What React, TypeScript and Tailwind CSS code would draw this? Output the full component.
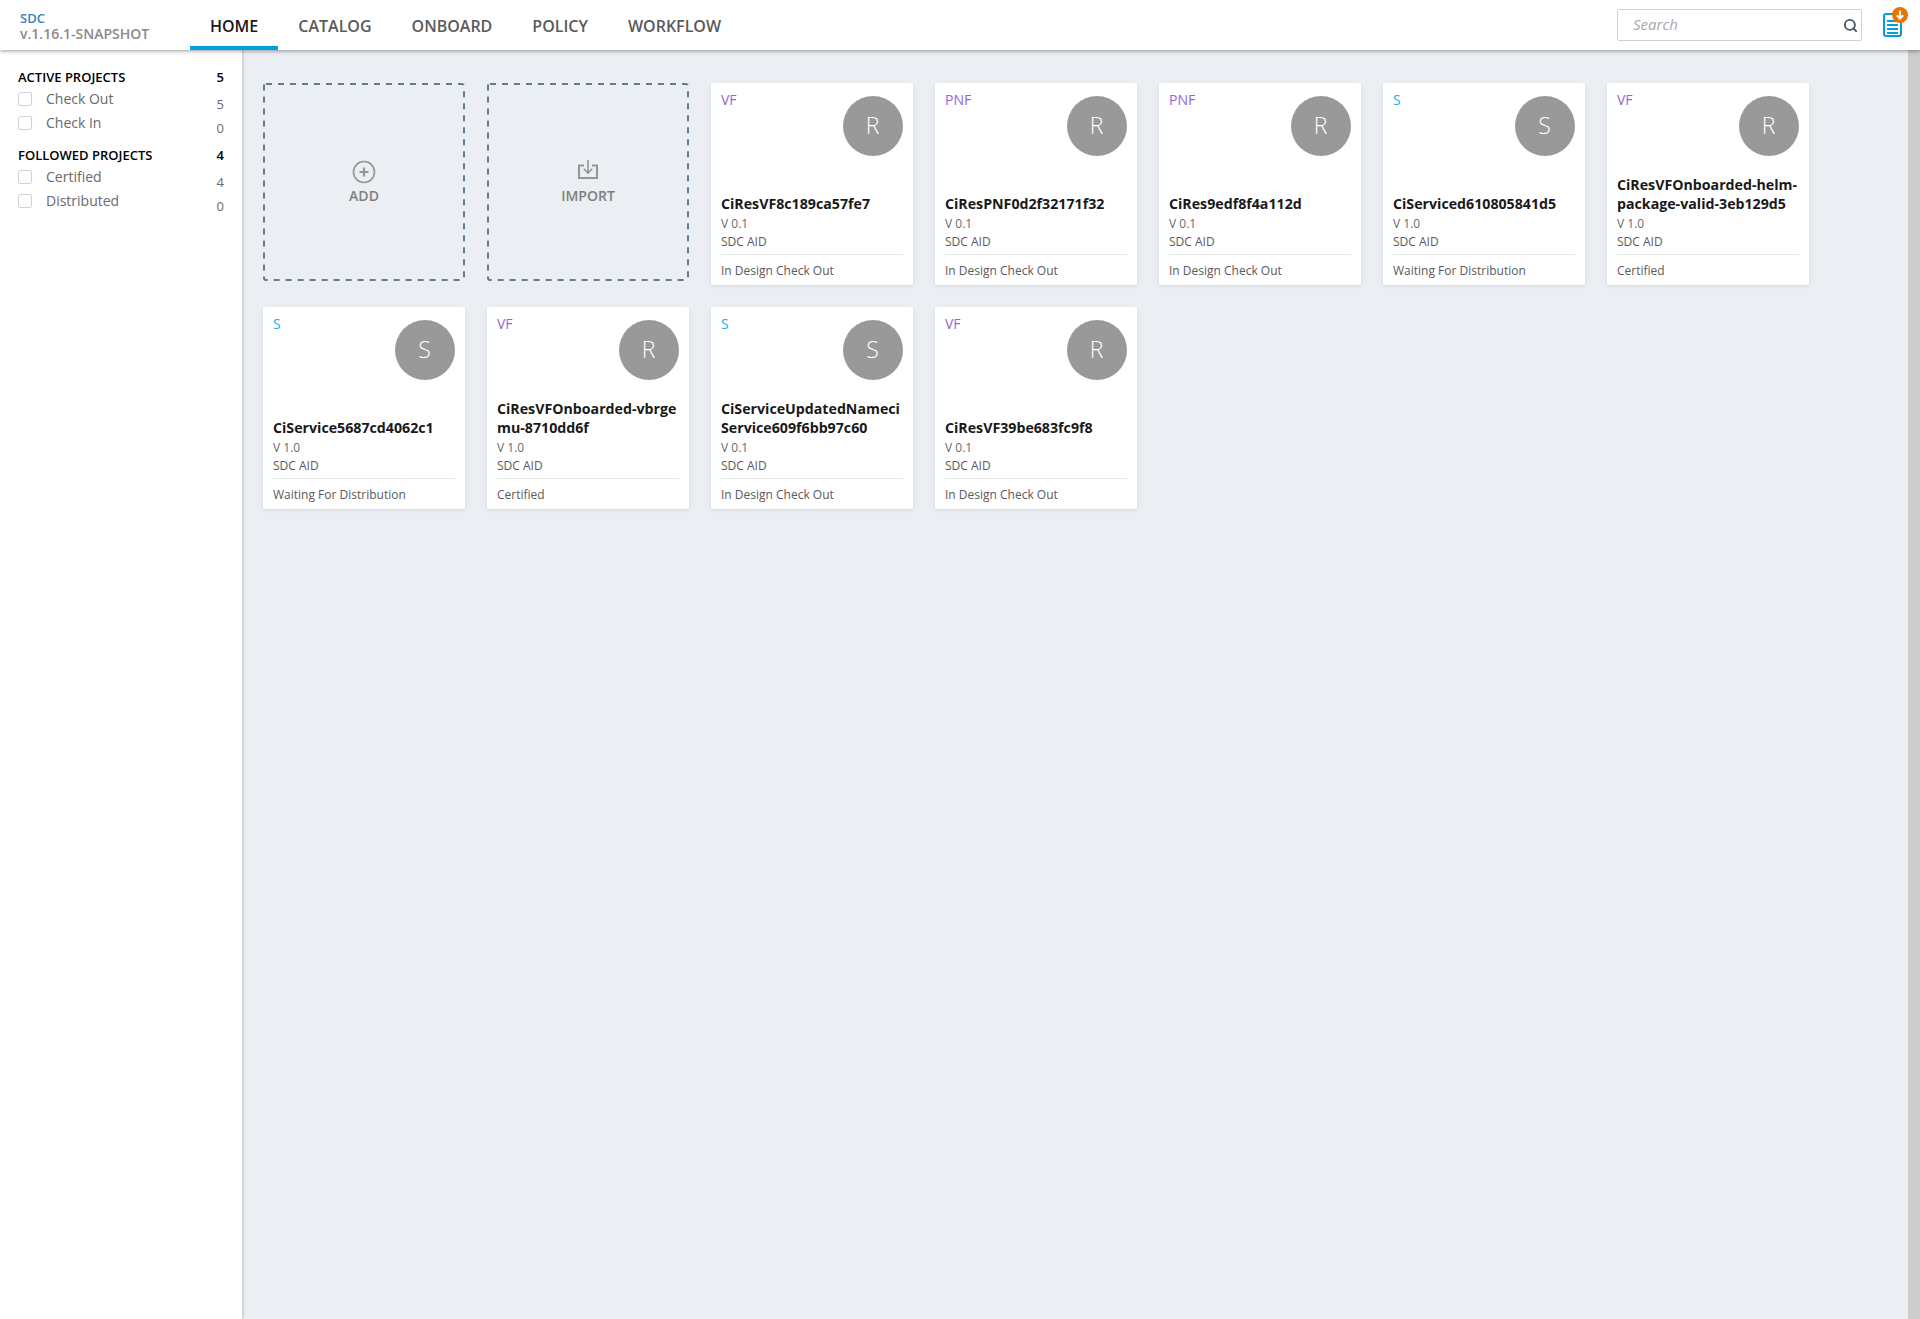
import { Search } from 'lucide-react';

type CardData = {
  type: string;
  letter: string;
  name: string;
  version: string;
  status: string;
};

const cards: CardData[] = [
  { type: 'VF', letter: 'R', name: 'CiResVF8c189ca57fe7', version: 'V 0.1', status: 'In Design Check Out' },
  { type: 'PNF', letter: 'R', name: 'CiResPNF0d2f32171f32', version: 'V 0.1', status: 'In Design Check Out' },
  { type: 'PNF', letter: 'R', name: 'CiRes9edf8f4a112d', version: 'V 0.1', status: 'In Design Check Out' },
  { type: 'S', letter: 'S', name: 'CiServiced610805841d5', version: 'V 1.0', status: 'Waiting For Distribution' },
  { type: 'VF', letter: 'R', name: 'CiResVFOnboarded-helm-package-valid-3eb129d5', version: 'V 1.0', status: 'Certified' },
  { type: 'S', letter: 'S', name: 'CiService5687cd4062c1', version: 'V 1.0', status: 'Waiting For Distribution' },
  { type: 'VF', letter: 'R', name: 'CiResVFOnboarded-vbrgemu-8710dd6f', version: 'V 1.0', status: 'Certified' },
  { type: 'S', letter: 'S', name: 'CiServiceUpdatedNameciService609f6bb97c60', version: 'V 0.1', status: 'In Design Check Out' },
  { type: 'VF', letter: 'R', name: 'CiResVF39be683fc9f8', version: 'V 0.1', status: 'In Design Check Out' },
];

const navItems = ['HOME', 'CATALOG', 'ONBOARD', 'POLICY', 'WORKFLOW'];

function FilterRow({ label, count }: { label: string; count: number }) {
  return (
    <div className="flex h-6 items-center">
      <span className="h-[14px] w-[14px] rounded-[2px] border border-[#d2d2d2] bg-white" />
      <span className="ml-[14px] text-sm text-[#6a6a6a]">{label}</span>
      <span className="mt-[11px] ml-auto text-[13px] text-[#6a6a6a]">{count}</span>
    </div>
  );
}

function FilterHead({ label, count }: { label: string; count: number }) {
  return (
    <div className="flex h-5 items-center text-[13px] font-semibold text-black">
      <span>{label}</span>
      <span className="ml-auto">{count}</span>
    </div>
  );
}

function AddIcon() {
  return (
    <svg width="24" height="24" viewBox="0 0 24 24" fill="none" stroke="#959595">
      <circle cx="12" cy="12" r="10.5" strokeWidth="1.6" />
      <path d="M12 7.5v9M7.5 12h9" strokeWidth="2.2" />
    </svg>
  );
}

function ImportIcon() {
  return (
    <svg width="20" height="19" viewBox="0 0 20 19" fill="none" stroke="#959595" strokeWidth="1.6">
      <path d="M6 5.5H1v12.5h18V5.5H14" strokeWidth="2" />
      <path d="M10 0v13M5.8 8.8 10 13l4.2-4.2" />
    </svg>
  );
}

function ActionTile({ label, icon }: { label: string; icon: React.ReactNode }) {
  return (
    <div className="relative flex h-[198px] w-[202px] flex-col items-center justify-center pt-[2px]">
      <svg width="202" height="198" fill="none" className="absolute inset-0">
        <rect x="1" y="1" width="200" height="196" rx="2" stroke="#5f7d8d" strokeWidth="2" strokeDasharray="6 6" />
      </svg>
      <div className="mb-[2px] flex h-6 items-start">{icon}</div>
      <span className="text-sm font-semibold text-[#7f7f7f]">{label}</span>
    </div>
  );
}

function Card({ card }: { card: CardData }) {
  const isService = card.type === 'S';
  return (
    <div className="flex h-[202px] w-[202px] flex-col bg-white px-[10px] shadow-[0_1px_4px_rgba(0,0,0,0.1)]">
      <div className="flex h-[76px] justify-between pt-[7px]">
        <span className={`text-sm leading-[19px] ${isService ? 'text-[#1eb2de]' : 'text-[#9b62d8]'}`}>{card.type}</span>
        <span className="mt-[6px] flex h-[60px] w-[60px] items-center justify-center rounded-full bg-[#999999] pr-[1px] pb-[1px] text-[23px] font-light text-white">
          {card.letter}
        </span>
      </div>
      <div className="flex flex-1 flex-col justify-end">
        <div className="text-[14.2px] leading-[19px] font-bold break-all text-[#191919]">{card.name}</div>
        <div className="mt-[2px] text-xs leading-[18px] text-[#6a6a6a]">{card.version}</div>
        <div className="text-xs leading-[18px] text-[#5a5a5a]">SDC AID</div>
      </div>
      <div className="mt-[3px] h-[31px] border-t border-[#e6e6e6] pt-[7px] text-xs leading-[18px] text-[#5a5a5a]">{card.status}</div>
    </div>
  );
}

export default function App() {
  return (
    <div className="flex h-[1319px] flex-col overflow-hidden bg-[#ebeef3] font-['Open_Sans',sans-serif]">
      {/* Header */}
      <header className="relative z-10 flex h-[50px] shrink-0 items-stretch bg-white shadow-[0_1px_4px_rgba(0,0,0,0.4)]">
        <div className="w-[190px] pt-[11px] pl-5 text-sm leading-[15px]">
          <div className="text-[13px] font-semibold text-[#3a80bd]">SDC</div>
          <div className="font-semibold text-[#8a8a8a]">v.1.16.1-SNAPSHOT</div>
        </div>
        <nav className="flex">
          {navItems.map((item) => (
            <div
              key={item}
              className={`flex items-center border-b-4 px-5 pt-[6px] text-base font-semibold ${
                item === 'HOME' ? 'border-[#009fdb] text-[#191919]' : 'border-transparent text-[#5a5a5a]'
              }`}
            >
              {item}
            </div>
          ))}
        </nav>
        <div className="ml-auto flex items-center pr-[17px]">
          <div className="flex h-8 w-[245px] items-center rounded-[2px] border border-[#d2d2d2] pr-[3px] pl-[15px]">
            <span className="flex-1 pb-[2px] text-[15px] text-[#a8a8a8] italic">Search</span>
            <Search size={15} strokeWidth={3} className="text-[#3f5566]" />
          </div>
          <div className="relative ml-[21px] h-6 w-5">
            <svg width="19" height="24" viewBox="0 0 19 24" fill="none" stroke="#009fdb">
              <rect x="1" y="1" width="17" height="22" rx="2" strokeWidth="2" />
              <path d="M4 8h11M4 12h11M4 16h11M4 20h11" strokeWidth="2" />
            </svg>
            <span className="absolute -top-[6px] left-[9px] flex h-4 w-4 items-center justify-center rounded-full bg-[#ea7400]">
              <svg width="10" height="10" viewBox="0 0 10 10" fill="none" stroke="white" strokeWidth="2">
                <path d="M5 0.5v8M1.8 5.2 5 8.5l3.2-3.3" />
              </svg>
            </span>
          </div>
        </div>
      </header>

      <div className="flex min-h-0 flex-1">
        {/* Sidebar */}
        <aside className="w-[242px] shrink-0 bg-white pt-[18px] pr-[18px] pl-[18px] shadow-[1px_0_3px_rgba(0,0,0,0.2)]">
          <div className="-mb-[1px]">
            <FilterHead label="ACTIVE PROJECTS" count={5} />
          </div>
          <FilterRow label="Check Out" count={5} />
          <FilterRow label="Check In" count={0} />
          <div className="mt-[11px] -mb-[1px]">
            <FilterHead label="FOLLOWED PROJECTS" count={4} />
          </div>
          <FilterRow label="Certified" count={4} />
          <FilterRow label="Distributed" count={0} />
        </aside>

        {/* Cards */}
        <main className="min-w-0 flex-1 pt-[33px] pl-[21px]">
          <div className="flex flex-wrap content-start gap-x-[22px] gap-y-[22px]">
            <ActionTile label="ADD" icon={<AddIcon />} />
            <ActionTile label="IMPORT" icon={<ImportIcon />} />
            {cards.map((card) => (
              <Card key={card.name} card={card} />
            ))}
          </div>
        </main>

        {/* Scrollbar */}
        <div className="w-3 shrink-0 bg-[#cccccc]" />
      </div>
    </div>
  );
}
